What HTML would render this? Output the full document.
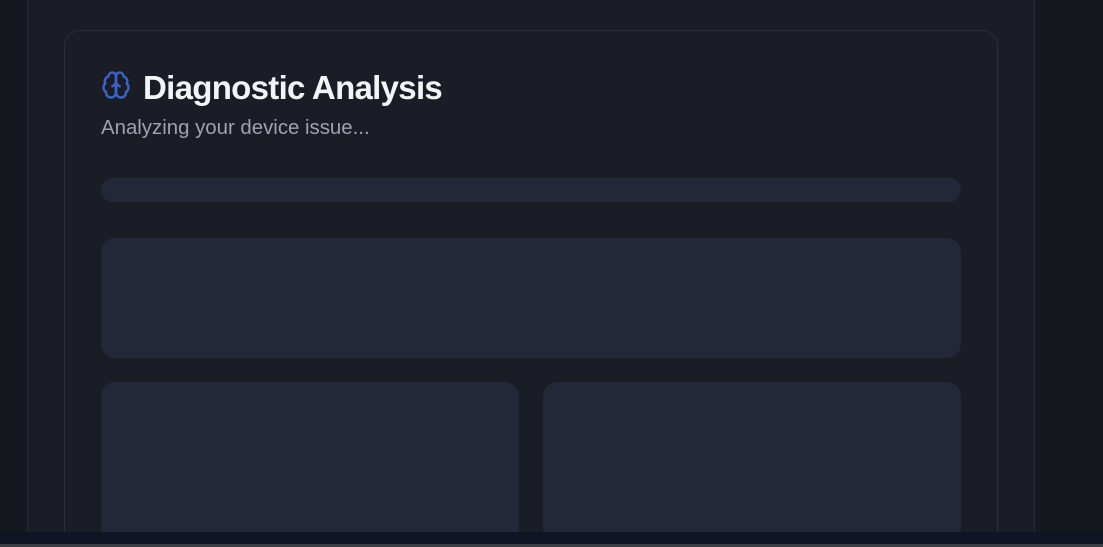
<!DOCTYPE html>
<html><head><meta charset="utf-8"><style>
html,body{margin:0;padding:0;width:1103px;height:547px;overflow:hidden;background:#15181f;font-family:"Liberation Sans",sans-serif;position:relative;}
.clip{position:absolute;left:0;top:0;width:1103px;height:532px;overflow:hidden;}
.wrap{position:absolute;left:27px;top:0;width:1006px;height:532px;background:#1a1d26;border-left:1px solid #262b38;border-right:1px solid #262b38;}
.card{position:absolute;left:64px;top:30px;width:932px;height:530px;border:1px solid #2a2f3c;border-radius:16px;background:#1a1d26;}
.title{position:absolute;left:143px;top:69px;font-size:33px;font-weight:bold;color:#f3f4f6;letter-spacing:-0.7px;}
.sub{position:absolute;left:101px;top:117px;font-size:20.4px;color:#9ca3af;}
.sk{position:absolute;background:#222837;}
.bar{position:absolute;left:0;top:532px;width:1103px;height:12px;background:#0f1525;}
.line{position:absolute;left:0;top:544px;width:1103px;height:3px;background:#3a3d44;}
</style></head><body>
<div class="clip">
<div class="wrap"></div>
<div class="card"></div>
<svg style="position:absolute;left:101px;top:70px" width="30" height="30" viewBox="0 0 24 24" fill="none" stroke="#3b63c4" stroke-width="2" stroke-linecap="round" stroke-linejoin="round">
<path d="M12 5a3 3 0 1 0-5.997.125 4 4 0 0 0-2.526 5.77 4 4 0 0 0 .556 6.588A4 4 0 1 0 12 18Z"/>
<path d="M12 5a3 3 0 1 1 5.997.125 4 4 0 0 1 2.526 5.77 4 4 0 0 1-.556 6.588A4 4 0 1 1 12 18Z"/>
<path d="M12 5v13"/><path d="M9 13a4.5 4.5 0 0 0 3-4"/><path d="M15 13a4.5 4.5 0 0 1-3-4"/>
</svg>
<div class="title">Diagnostic Analysis</div>
<div class="sub">Analyzing your device issue...</div>
<div class="sk" style="left:101px;top:178px;width:860px;height:24px;border-radius:12px"></div>
<div class="sk" style="left:101px;top:238px;width:860px;height:120px;border-radius:14px"></div>
<div class="sk" style="left:101px;top:382px;width:418px;height:160px;border-radius:14px"></div>
<div class="sk" style="left:543px;top:382px;width:418px;height:160px;border-radius:14px"></div>
</div>
<div class="bar"></div>
<div class="line"></div>
</body></html>
